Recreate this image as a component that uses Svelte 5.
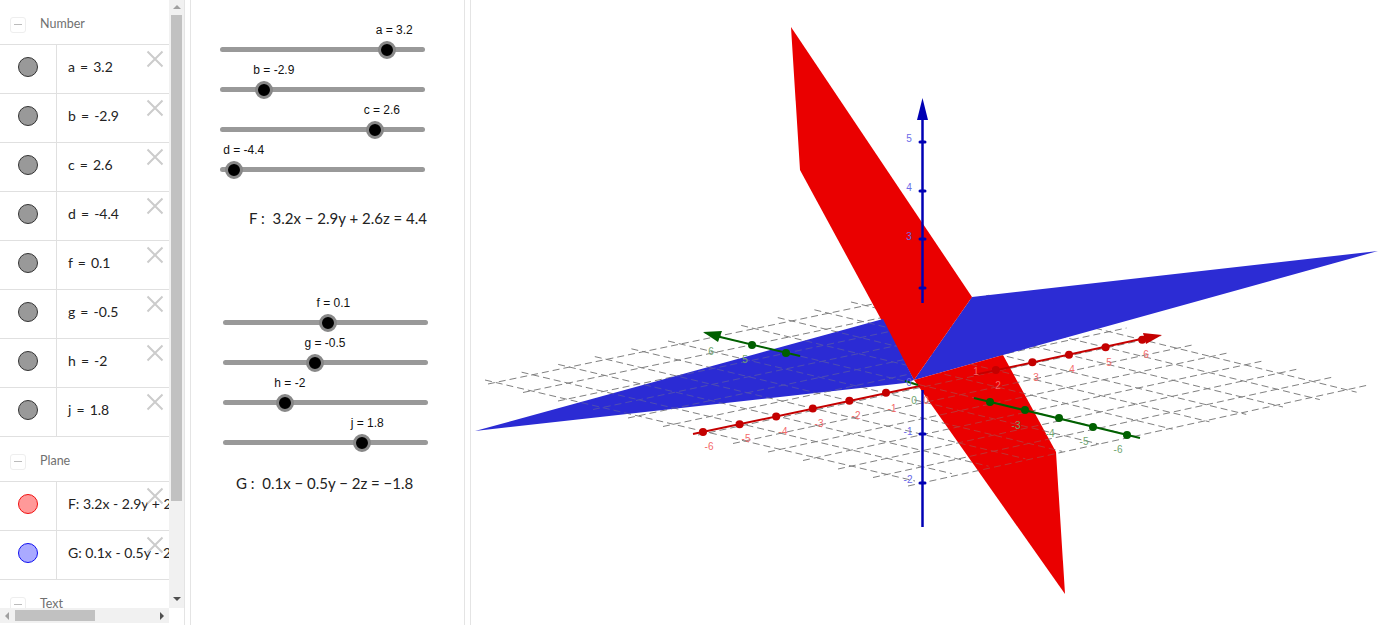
<script lang="ts">
	interface Row {
		text: string;
		color?: string;
		edge?: string;
	}

	const numbers: Row[] = [
		{ text: 'a = 3.2' },
		{ text: 'b = -2.9' },
		{ text: 'c = 2.6' },
		{ text: 'd = -4.4' },
		{ text: 'f = 0.1' },
		{ text: 'g = -0.5' },
		{ text: 'h = -2' },
		{ text: 'j = 1.8' }
	];
	const planes: Row[] = [
		{ text: 'F: 3.2x - 2.9y + 2.6z = 4.4', color: '#ff9999', edge: '#f01010' },
		{ text: 'G: 0.1x - 0.5y - 2z = -1.8', color: '#aaaaff', edge: '#1010f0' }
	];
	const groups = [
		{ numbers: numbers.slice(0, 4), values: [3.2, -2.9, 2.6, -4.4] },
		{ numbers: numbers.slice(4), values: [0.1, -0.5, -2, 1.8] }
	];

	// one unit of slider value in pixels
	const unit = 20.07;

	const range = (n: number) => Array.from({ length: n }, (_, i) => i);

	// grid lines of the xOy plane, read off the reference
	const gridA = range(13).map((k) => [488 + 35 * k, 384 + 8.5 * k, 955 + 34.3 * k, 287 + 8.2 * k]);
	const gridB = range(13).map((j) => [485 + 36.6 * j, 380 - 7.8 * j, 915 + 36.8 * j, 481 - 7.4 * j]);
	const grid = [...gridA, ...gridB];

	const redTicks = [-6, -5, -4, -3, -2, -1].map((i) => [922.6 + 36.6 * i, 385 - 7.85 * i]);
	const redTicksRight = [2, 3, 4, 5, 6].map((i) => [922.6 + 36.6 * i, 385 - 7.55 * i]);
	const greenTicks = [
		[752, 345],
		[786, 353]
	];
	const greenTicksRight = [
		[990, 402],
		[1025, 410],
		[1059, 418],
		[1093, 427],
		[1127, 435]
	];
	const blueTicks = [142, 191, 239, 288, 434, 483];

	const labels = [
		{ t: '-6', x: 709, y: 447, c: 'lr' },
		{ t: '-5', x: 746, y: 439, c: 'lr' },
		{ t: '-4', x: 783, y: 432, c: 'lr' },
		{ t: '-3', x: 819, y: 424, c: 'lr' },
		{ t: '-2', x: 856, y: 416, c: 'lr' },
		{ t: '-1', x: 892, y: 409, c: 'lr' },
		{ t: '0', x: 926, y: 401, c: 'lr' },
		{ t: '1', x: 976, y: 372, c: 'lr' },
		{ t: '2', x: 998, y: 386, c: 'lr' },
		{ t: '3', x: 1036, y: 378, c: 'lr' },
		{ t: '4', x: 1072, y: 370, c: 'lr' },
		{ t: '5', x: 1109, y: 363, c: 'lr' },
		{ t: '6', x: 1146, y: 355, c: 'lr' },
		{ t: '6', x: 711, y: 352, c: 'lg' },
		{ t: '5', x: 745, y: 360, c: 'lg' },
		{ t: '0', x: 914, y: 401, c: 'lg' },
		{ t: '-3', x: 1016, y: 426, c: 'lg' },
		{ t: '-4', x: 1050, y: 434, c: 'lg' },
		{ t: '-5', x: 1084, y: 442, c: 'lg' },
		{ t: '-6', x: 1118, y: 450, c: 'lg' },
		{ t: '5', x: 909, y: 139, c: 'lb' },
		{ t: '4', x: 909, y: 188, c: 'lb' },
		{ t: '3', x: 909, y: 237, c: 'lb' },
		{ t: '0', x: 909, y: 383, c: 'lb' },
		{ t: '-1', x: 908, y: 432, c: 'lb' },
		{ t: '-2', x: 908, y: 480, c: 'lb' }
	];
</script>

{#snippet row(item: Row, spaced: boolean)}
	<div class="row">
		<div class="marble-cell">
			<span class="marble" style="background: {item.color ?? '#999999'}; border-color: {item.edge ?? '#333333'}"></span>
		</div>
		<div class="row-text" class:spaced>{item.text}</div>
		<svg class="close" width="18" height="18" viewBox="0 0 18 18">
			<path d="M1.5 1.5 L16.5 16.5 M16.5 1.5 L1.5 16.5" />
		</svg>
	</div>
{/snippet}

{#snippet header(label: string)}
	<div class="group-head">
		<span class="toggle"><span class="minus"></span></span>
		<span class="group-label">{label}</span>
	</div>
{/snippet}

<main class="app">
	<aside class="algebra">
		<div class="algebra-main">
			<div class="list">
				{@render header('Number')}
				{#each numbers as item}
					{@render row(item, true)}
				{/each}
				{@render header('Plane')}
				{#each planes as item}
					{@render row(item, false)}
				{/each}
				{@render header('Text')}
			</div>
			<div class="vbar">
				<span class="arrow up"></span>
				<span class="vthumb"></span>
				<span class="arrow down"></span>
			</div>
		</div>
		<div class="hbar">
			<span class="arrow left"></span>
			<span class="hthumb"></span>
			<span class="arrow right"></span>
		</div>
	</aside>

	<div class="divider"></div>

	<section class="sliders">
		<div class="group first">
			{#each groups[0].numbers as item, i}
				<div class="slider">
					<div class="track">
						<span class="slider-label" style="left: calc(50% + {groups[0].values[i] * unit - 11}px)">{item.text}</span>
						<span class="knob" style="left: calc(50% + {groups[0].values[i] * unit}px)"></span>
					</div>
				</div>
			{/each}
			<p class="equation eq-f">F : &nbsp;3.2x − 2.9y + 2.6z = 4.4</p>
		</div>
		<div class="group second">
			{#each groups[1].numbers as item, i}
				<div class="slider">
					<div class="track">
						<span class="slider-label" style="left: calc(50% + {groups[1].values[i] * unit - 11}px)">{item.text}</span>
						<span class="knob" style="left: calc(50% + {groups[1].values[i] * unit}px)"></span>
					</div>
				</div>
			{/each}
			<p class="equation eq-g">G : &nbsp;0.1x − 0.5y − 2z = −1.8</p>
		</div>
	</section>

	<div class="divider"></div>

	<section class="view">
		<svg width="911" height="625" viewBox="471 0 911 625">
			<defs>
				<clipPath id="over">
					<polygon points="475,431 883,319 913,379 905,383" />
					<polygon points="914,380 1003,355 1056,452 1065,594" />
				</clipPath>
			</defs>

			{#each grid as g}
				<line class="grid" x1={g[0]} y1={g[1]} x2={g[2]} y2={g[3]} />
			{/each}

			<polygon class="plane-blue" points="972,297 1378,251 1003,355 914,380" />
			<polygon class="plane-red" points="791,27 972,297 914,380 800,170" />
			<polygon class="plane-blue" points="475,431 883,319 914,380 905,383" />
			<polygon class="plane-red" points="914,380 1003,355 1056,452 1065,594" />

			<g clip-path="url(#over)" opacity="0.4">
				{#each grid as g}
					<line class="grid" x1={g[0]} y1={g[1]} x2={g[2]} y2={g[3]} />
				{/each}
			</g>

			<!-- axes, split where a plane hides them -->
			<line class="ax-red" x1="693" y1="434" x2="920" y2="386" />
			<line class="ax-red" x1="974" y1="375" x2="1146" y2="338" />
			<polygon class="head-red" points="1162,335 1143,333 1146,344" />
			{#each [...redTicks, ...redTicksRight] as p}
				<circle class="tick-red" cx={p[0]} cy={p[1]} r="4" />
			{/each}

			<line class="ax-green" x1="716" y1="336" x2="800" y2="356" />
			<line class="ax-green" x1="905" y1="381" x2="918" y2="385" />
			<line class="ax-green" x1="974" y1="398" x2="1140" y2="438" />
			<polygon class="head-green" points="703,332 722,331 718,342" />
			{#each [...greenTicks, ...greenTicksRight] as p}
				<circle class="tick-green" cx={p[0]} cy={p[1]} r="4" />
			{/each}

			<line class="ax-blue" x1="922.5" y1="118" x2="922.5" y2="303" />
			<line class="ax-blue" x1="922.5" y1="390" x2="922.5" y2="527" />
			<polygon class="head-blue" points="922.5,98 917,120 928,120" />
			{#each blueTicks as y}
				<rect class="head-blue" x="918.5" y={y - 1.5} width="8" height="3" rx="1.5" />
			{/each}

			{#each labels as l}
				<text class="axis-label {l.c}" x={l.x} y={l.y + 3} text-anchor="middle">{l.t}</text>
			{/each}
		</svg>
	</section>
</main>

<style>
	:global(body) {
		margin: 0;
		background: #ffffff;
	}

	.app {
		display: flex;
		width: 1382px;
		height: 625px;
		overflow: hidden;
		background: #ffffff;
		font-family: 'Lato', 'Noto Sans', sans-serif;
	}

	/* algebra view */
	.algebra {
		width: 184px;
		flex: none;
		display: flex;
		flex-direction: column;
	}

	.algebra-main {
		display: flex;
		height: 608px;
	}

	.list {
		width: 169px;
		overflow: hidden;
		flex: none;
	}

	.group-head {
		height: 45px;
		display: flex;
		align-items: center;
		gap: 14px;
		padding-left: 10px;
		padding-top: 3px;
		box-sizing: border-box;
		border-bottom: 1px solid #e0e0e0;
	}

	.toggle {
		width: 14px;
		height: 14px;
		margin-top: 2px;
		border: 1px solid #eeeeee;
		border-radius: 3px;
		display: flex;
		align-items: center;
		justify-content: center;
	}

	.minus {
		width: 8px;
		height: 1.5px;
		background: #bbbbbb;
	}

	.group-label {
		font-size: 12.5px;
		color: #707070;
	}

	.row {
		position: relative;
		height: 49px;
		display: flex;
		box-sizing: border-box;
		border-bottom: 1px solid #e0e0e0;
	}

	.marble-cell {
		width: 57px;
		box-sizing: border-box;
		flex: none;
		display: flex;
		align-items: center;
		justify-content: center;
		border-right: 1px solid #e0e0e0;
	}

	.marble {
		width: 18px;
		height: 18px;
		margin-bottom: 4px;
		border: 1px solid #333333;
		border-radius: 50%;
	}

	.row-text {
		padding-left: 11px;
		line-height: 44px;
		font-size: 14px;
		color: #222222;
		white-space: nowrap;
	}

	.row-text.spaced {
		word-spacing: 1.5px;
	}

	.close {
		position: absolute;
		left: 146px;
		top: 5px;
	}

	.close path {
		fill: none;
		stroke: #cccccc;
		stroke-width: 2;
	}

	/* fake scrollbars */
	.vbar {
		width: 15px;
		flex: none;
		display: flex;
		flex-direction: column;
		align-items: center;
		background: #f1f1f1;
	}

	.vthumb {
		width: 11px;
		height: 486px;
		background: #c1c1c1;
		margin-top: 6px;
	}

	.hbar {
		height: 15px;
		width: 169px;
		box-sizing: border-box;
		padding-left: 5px;
		background: #f1f1f1;
		display: flex;
		align-items: center;
	}

	.hthumb {
		width: 80px;
		height: 11px;
		background: #c1c1c1;
		margin-left: 6px;
	}

	.arrow {
		width: 0;
		height: 0;
		display: block;
	}

	.arrow.up {
		margin-top: 5px;
		border: 4px solid transparent;
		border-top: 0;
		border-bottom: 4px solid #a0a0a0;
	}

	.arrow.down {
		margin-top: 96px;
		border: 4px solid transparent;
		border-bottom: 0;
		border-top: 4px solid #505050;
	}

	.arrow.left {
		border: 4px solid transparent;
		border-left: 0;
		border-right: 4px solid #a0a0a0;
	}

	.arrow.right {
		margin-left: 65px;
		border: 4px solid transparent;
		border-right: 0;
		border-left: 4px solid #505050;
	}

	.divider {
		width: 7px;
		flex: none;
		box-sizing: border-box;
		border-left: 1px solid #e4e4e4;
		border-right: 1px solid #e4e4e4;
	}

	/* sliders */
	.sliders {
		width: 273px;
		flex: none;
	}

	.group.first {
		padding: 30px 0 0 29px;
		height: 280px;
		box-sizing: border-box;
	}

	.group.second {
		padding: 23px 0 0 32px;
	}

	.slider {
		width: 205px;
		height: 40px;
		display: flex;
		align-items: flex-end;
	}

	.track {
		position: relative;
		width: 100%;
		height: 5px;
		margin-bottom: 18px;
		border-radius: 3px;
		background: #999999;
	}

	.knob {
		position: absolute;
		top: 50%;
		width: 12px;
		height: 12px;
		transform: translate(-50%, -50%);
		border-radius: 50%;
		background: #000000;
		border: 3px solid #888888;
	}

	.slider-label {
		position: absolute;
		bottom: 15px;
		font-family: 'Liberation Sans', Arial, sans-serif;
		font-size: 12px;
		line-height: 14px;
		color: #111111;
		white-space: nowrap;
	}

	.equation {
		margin: 0;
		font-size: 15px;
		color: #222222;
		white-space: nowrap;
	}

	.eq-f {
		margin: 19px 0 0 1px;
		text-align: right;
		width: 206px;
	}

	.eq-g {
		margin: 11px 0 0 13px;
	}

	/* 3d view */
	.view {
		flex: 1;
		min-width: 0;
	}

	.view svg {
		display: block;
	}

	.plane-red {
		fill: #ea0000;
	}

	.plane-blue {
		fill: #2c2cd4;
	}

	.grid {
		stroke: #808080;
		stroke-width: 1;
		stroke-dasharray: 7 4;
	}

	.ax-red {
		stroke: #c40000;
		stroke-width: 2;
	}

	.ax-green {
		stroke: #006000;
		stroke-width: 2;
	}

	.ax-blue {
		stroke: #0000b4;
		stroke-width: 2.5;
	}

	.head-red,
	.tick-red {
		fill: #c40000;
	}

	.head-green,
	.tick-green {
		fill: #006000;
	}

	.head-blue {
		fill: #0000b4;
	}

	.axis-label {
		font-family: 'Liberation Sans', Arial, sans-serif;
		font-size: 10px;
	}

	.lr {
		fill: #f46a6a;
	}

	.lg {
		fill: #6fa56f;
	}

	.lb {
		fill: #6a6ae8;
	}
</style>
